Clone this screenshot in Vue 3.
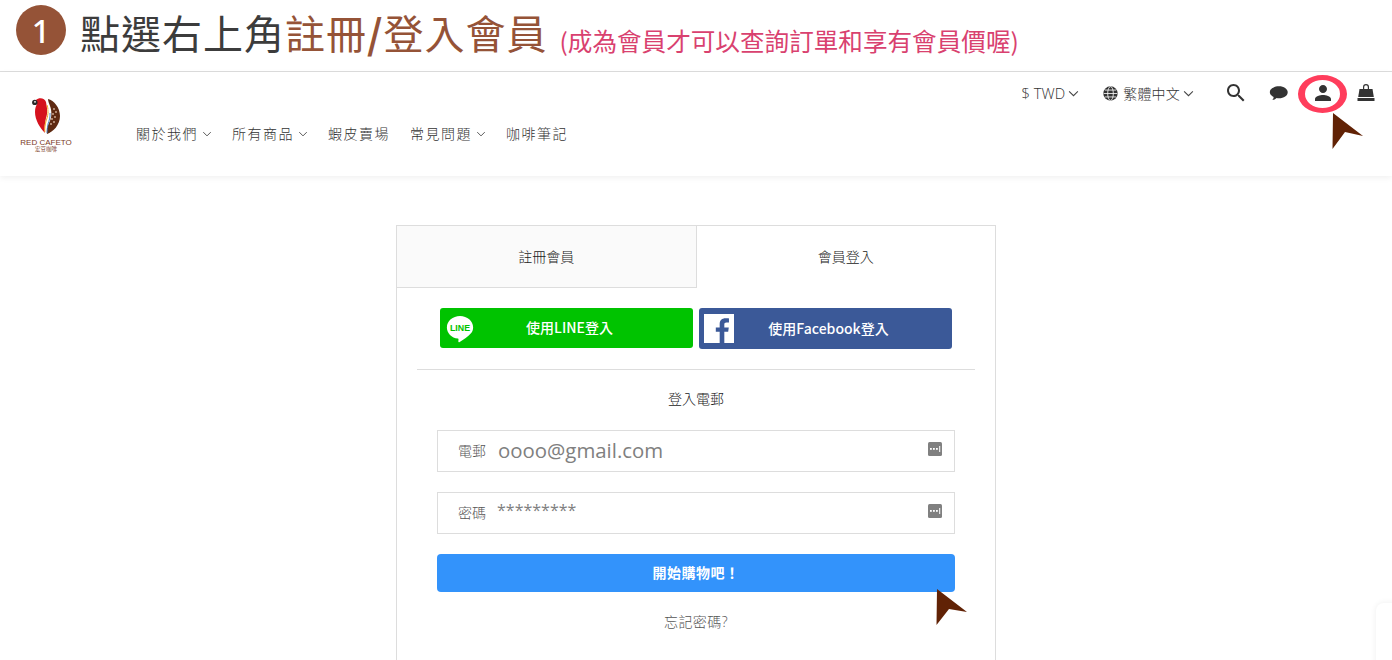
<script setup>
const navItems = [
  { label: '關於我們', caret: true },
  { label: '所有商品', caret: true },
  { label: '蝦皮賣場', caret: false },
  { label: '常見問題', caret: true },
  { label: '咖啡筆記', caret: false },
]
const fields = [
  { label: '電郵', value: 'oooo@gmail.com', cls: 'val-mail' },
  { label: '密碼', value: '*********', cls: 'val-pass' },
]
</script>

<template>
  <div class="page">
    <div class="banner">
      <span class="step">1</span>
      <h1 class="title">點選右上角<em>註冊<b>/</b>登入會員</em></h1>
      <span class="sub">(成為會員才可以查詢訂單和享有會員價喔)</span>
    </div>

    <header class="header">
      <div class="logo">
        <svg class="logo-mark" viewBox="0 0 28 36" width="28" height="36">
          <path d="M16 1C22 2 28 10 28 18C28 27 21 34 15 36C14 33 15 29 17 25C20 20 20 13 18 8C17 5 16 3 16 1Z" fill="#5f2a12" />
          <path d="M4 2C7-1 13 0 14 4C15 10 16 14 14 20C13 25 12 30 13 35C8 30 3 22 3 14C3 10 4 8 5 6Z" fill="#d5121e" />
          <path d="M15 7C17 13 16 18 14 23C13 27 12.500 30 13 34" fill="none" stroke="#f2a81d" stroke-width="1" />
          <path d="M17 11C18 16 17 20 15.500 24C14.500 27 14 31 14.200 35" fill="none" stroke="#fff" stroke-width="1" />
          <path d="M18 15C18.500 19 17 23 16 26C15.500 29 15 32 15 35" fill="none" stroke="#3e7cc0" stroke-width=".9" />
          <circle cx="2.800" cy="4.400" r="2.700" fill="#2a2a2a" />
          <circle cx="3" cy="3.800" r=".9" fill="#fff" />
          <g fill="#d9b7a0">
            <circle cx="22" cy="11" r=".9" /><circle cx="24" cy="14" r=".9" /><circle cx="21" cy="16" r=".9" />
            <circle cx="23" cy="19" r=".9" /><circle cx="20" cy="21" r=".9" /><circle cx="22" cy="24" r=".9" /><circle cx="19" cy="26" r=".9" />
          </g>
        </svg>
        <span class="logo-en">RED CAFETO</span>
        <span class="logo-zh">宏豆咖啡</span>
      </div>

      <div class="header-main">
        <div class="utility">
          <span class="util-item currency">$ TWD
            <svg viewBox="0 0 12 8" width="11" height="7"><path d="M1 1.500l5 5 5-5" fill="none" stroke="#444" stroke-width="1.200" /></svg>
          </span>
          <span class="util-item lang">
            <svg viewBox="0 0 24 24" width="15" height="15" fill="none">
              <circle cx="12" cy="12" r="11.500" fill="#333" />
              <g stroke="#fff" stroke-width="1.300" fill="none">
                <ellipse cx="12" cy="12" rx="4.500" ry="11" />
                <path d="M1 12h22M3 6.500h18M3 17.500h18" />
              </g>
            </svg>
            <span class="lang-text">繁體中文</span>
            <svg class="lang-caret" viewBox="0 0 12 8" width="11" height="7"><path d="M1 1.500l5 5 5-5" fill="none" stroke="#444" stroke-width="1.200" /></svg>
          </span>
          <div class="tools">
            <svg class="ico-search" viewBox="0 0 24 24" width="24" height="24" fill="#333"><path d="M15.500 14h-.79l-.28-.27C15.410 12.590 16 11.110 16 9.500 16 5.910 13.090 3 9.500 3S3 5.910 3 9.500 5.910 16 9.500 16c1.610 0 3.090-.59 4.230-1.570l.27.28v.79l5 4.990L20.490 19l-4.990-5zm-6 0C7.010 14 5 11.990 5 9.500S7.010 5 9.500 5 14 7.010 14 9.500 11.990 14 9.500 14z" /></svg>
            <svg viewBox="0 0 24 24" width="22" height="22" fill="#333"><path d="M12 4.500c5.300 0 9.500 2.900 9.500 6.600s-4.200 6.600-9.500 6.600c-.9 0-1.800-.1-2.600-.3-1.300 1.300-3 2-4.700 2.200.8-.9 1.400-2 1.500-3.300-2.600-1.200-4.200-3-4.200-5.200 0-3.700 4.700-6.600 10-6.600z" /></svg>
            <svg viewBox="0 0 24 24" width="24" height="24" fill="#333"><path d="M12 12c2.210 0 4-1.790 4-4s-1.790-4-4-4-4 1.790-4 4 1.790 4 4 4zm0 2c-2.670 0-8 1.340-8 4v2h16v-2c0-2.660-5.330-4-8-4z" /></svg>
            <svg viewBox="0 0 20 20" width="20" height="20" fill="#333"><path d="M7 7V4a3 3 0 0 1 6 0v3h-1.200V4a1.800 1.800 0 0 0-3.600 0v3z" /><path d="M3.500 6h13l1.300 8H2.200z" /><rect x="1.500" y="15" width="17" height="3" /></svg>
          </div>
        </div>
        <nav class="nav">
          <span v-for="item in navItems" :key="item.label" class="nav-item">
            {{ item.label }}
            <svg v-if="item.caret" viewBox="0 0 12 8" width="10" height="6"><path d="M1 1.500l5 5 5-5" fill="none" stroke="#555" stroke-width="1.300" /></svg>
          </span>
        </nav>
      </div>
    </header>

    <main class="main">
      <section class="card">
        <div class="tabs">
          <div class="tab tab-off">註冊會員</div>
          <div class="tab tab-on">會員登入</div>
        </div>
        <div class="body">
          <div class="socials">
            <a class="social line">
              <svg class="line-ico" viewBox="0 0 32 34" width="28" height="30">
                <path d="M16 1C7.700 1 1 6.700 1 14c0 6.500 5.400 11.800 12.600 12.800 1 .2.700 1.300.5 3-.1.900.4 1.500 1.500.9 3.800-2 9.500-6 12.400-9.300C30 19.200 31 16.800 31 14 31 6.700 24.300 1 16 1z" fill="#fff" />
                <text x="16" y="18.500" text-anchor="middle" textLength="23" lengthAdjust="spacingAndGlyphs" class="line-word">LINE</text>
              </svg>
              <span>使用LINE登入</span>
            </a>
            <a class="social fb">
              <svg class="fb-ico" viewBox="0 0 31 31" width="30" height="29" preserveAspectRatio="none">
                <rect width="31" height="31" fill="#fff" />
                <path d="M21 31V19h4l.6-4.700H21v-3c0-1.400.4-2.300 2.300-2.300h2.500V4.800c-.4-.1-1.900-.2-3.600-.2-3.600 0-6 2.200-6 6.200v3.500h-4V19h4v12z" fill="#3b5998" />
              </svg>
              <span>使用Facebook登入</span>
            </a>
          </div>
          <p class="form-title">登入電郵</p>
          <div v-for="f in fields" :key="f.label" class="field">
            <span class="field-label">{{ f.label }}</span>
            <span class="field-value" :class="f.cls">{{ f.value }}</span>
            <svg class="key" viewBox="0 0 14 14" width="14" height="14">
              <rect width="14" height="14" rx="1.500" fill="#808080" />
              <g fill="#fff"><rect x="2" y="6" width="1.800" height="1.800" /><rect x="5" y="6" width="1.800" height="1.800" /><rect x="8" y="6" width="1.800" height="1.800" /><rect x="11.200" y="4" width="1" height="6" /></g>
            </svg>
          </div>
          <button class="submit" type="button">開始購物吧！</button>
          <p class="forgot">忘記密碼?</p>
        </div>
      </section>
    </main>

    <div class="ring"></div>
    <svg class="pointer pointer-top" viewBox="0 0 34 40" width="34" height="40"><path d="M2 2L32 25 14 21 1.500 38z" fill="#612205" /></svg>
    <svg class="pointer pointer-btn" viewBox="0 0 34 40" width="34" height="40"><path d="M2 2L32 25 14 22 1.500 38z" fill="#612205" /></svg>
    <div class="widget"></div>
  </div>
</template>

<style>
html, body { margin: 0; background: #fff; }
</style>

<style scoped>
.page {
  position: relative;
  height: 660px;
  overflow: hidden;
  background: #fff;
  color: #333;
  font-family: "Open Sans", "Noto Sans CJK TC", sans-serif;
}
.banner {
  display: flex;
  align-items: center;
  height: 72px;
  padding: 0 0 11px 16px;
  box-sizing: border-box;
  border-bottom: 1px solid #ddd;
}
.step {
  width: 50px;
  height: 50px;
  border-radius: 50%;
  background: #955337;
  color: #fff;
  font-size: 32px;
  font-weight: 500;
  line-height: 52px;
  text-align: center;
  font-family: "Noto Sans", sans-serif;
}
.title {
  margin: 0 0 0 14px;
  padding-top: 3px;
  font-size: 40px;
  line-height: 50px;
  font-weight: 400;
  letter-spacing: 1px;
  color: #3c3c3c;
  font-family: "Noto Sans CJK TC", sans-serif;
}
.title em {
  font-style: normal;
  color: #955337;
}
.title b { font-weight: 700; }
.sub {
  margin: 0 0 0 12px;
  padding-top: 20px;
  font-size: 24.600px;
  line-height: 36px;
  font-weight: 400;
  color: #d9416f;
  font-family: "Noto Sans CJK TC", sans-serif;
}
.header {
  display: flex;
  height: 104px;
  box-sizing: border-box;
  padding: 26px 16px 0 20px;
  box-shadow: 0 2px 6px rgba(0, 0, 0, .06);
}
.logo {
  width: 52px;
  display: flex;
  flex-direction: column;
  align-items: center;
  color: #7a3a1e;
  line-height: 1;
}
.logo-mark { display: block; margin: 0 0 5px; flex: none; }
.logo-en {
  font-size: 8px;
  white-space: nowrap;
  font-family: "Liberation Sans", sans-serif;
}
.logo-zh { font-size: 5.500px; margin-top: 0; white-space: nowrap; }
.header-main {
  flex: 1;
  min-width: 0;
  display: flex;
  flex-direction: column;
}
.utility {
  display: flex;
  justify-content: flex-end;
  align-items: center;
  height: 22px;
  margin-top: -16px;
  font-size: 14px;
  color: #333;
}
.util-item {
  display: inline-flex;
  align-items: center;
  gap: 3px;
  white-space: nowrap;
}
.currency { font-size: 14.800px; font-weight: 300; }
.lang { margin-left: 24px; gap: 5px; }
.lang-text { font-size: 14px; letter-spacing: .2px; font-weight: 300; }
.lang-caret { margin-left: -2px; }
.tools {
  display: flex;
  align-items: center;
  gap: 21px;
  margin-left: 30px;
}
.ico-search { margin-right: -1px; }
.nav {
  display: flex;
  gap: 20px;
  margin: 19px 0 0 64px;
  font-size: 14px;
  font-weight: 300;
  letter-spacing: 1.500px;
  color: #333;
}
.nav-item {
  display: inline-flex;
  align-items: center;
  gap: 4px;
  white-space: nowrap;
  line-height: 22px;
}
.main {
  display: flex;
  justify-content: center;
  padding-top: 49px;
}
.card {
  width: 600px;
  min-height: 600px;
  box-sizing: border-box;
  border: 1px solid #ddd;
}
.tabs {
  display: flex;
  height: 62px;
  font-size: 14px;
  font-weight: 300;
  color: #222;
}
.tab {
  flex: 1 1 0;
  box-sizing: border-box;
  display: flex;
  align-items: center;
  justify-content: center;
  padding-bottom: 2px;
}
.tab-off {
  background: #fafafa;
  border-right: 1px solid #ddd;
  border-bottom: 1px solid #ddd;
}
.body {
  padding: 20px 20px 0;
}
.socials {
  display: flex;
  justify-content: center;
  gap: 6px;
  padding-bottom: 20px;
  border-bottom: 1px solid #ddd;
}
.social {
  position: relative;
  width: 253px;
  height: 40px;
  padding: 0 0 2px 6px;
  box-sizing: border-box;
  border-radius: 3px;
  display: flex;
  align-items: center;
  justify-content: center;
  color: #fff;
  font-size: 14px;
  font-weight: 500;
  font-family: "Noto Sans CJK TC", sans-serif;
}
.social.line { background: #00c300; }
.social.fb { background: #3b5998; height: 41px; }
.line-ico { position: absolute; top: 7px; left: 6px; }
.fb-ico { position: absolute; left: 5px; top: 6px; }
.line-word {
  font-size: 10.500px;
  font-weight: 700;
  fill: #00c300;
  font-family: "Liberation Sans", sans-serif;
}
.form-title {
  margin: 19px 0 21px;
  text-align: center;
  font-size: 14px;
  font-weight: 300;
  line-height: 20px;
  color: #222;
}
.field {
  display: flex;
  align-items: center;
  height: 42px;
  box-sizing: border-box;
  margin: 0 20px 20px;
  border: 1px solid #ddd;
  padding: 0 12px 0 20px;
  color: #808080;
}
.field-label {
  width: 40px;
  padding-bottom: 2px;
  font-size: 14px;
  font-weight: 300;
  color: #555;
}
.field-value { flex: 1; }
.val-mail { font-size: 20.400px; margin-top: -2px; }
.val-pass { font-size: 16px; line-height: 20px; margin: -7px 0 0 -1px; }
.key { margin-top: -4px; }
.submit {
  display: block;
  width: 518px;
  height: 38px;
  margin: 0 20px;
  padding: 0 0 2px;
  border: 0;
  border-radius: 4px;
  background: #3393fb;
  color: #fff;
  font-size: 14px;
  font-weight: 700;
  letter-spacing: .5px;
  font-family: inherit;
}
.forgot {
  margin: 20px 0 0;
  text-align: center;
  font-size: 14px;
  font-weight: 300;
  line-height: 20px;
  color: #555;
  letter-spacing: .4px;
}
.ring {
  position: absolute;
  left: 1298px;
  top: 75px;
  width: 49px;
  height: 38px;
  box-sizing: border-box;
  border-style: solid;
  border-width: 5px 7px;
  border-color: #ff3d5c;
  border-radius: 50%;
}
.pointer { position: absolute; }
.pointer-top { left: 1331px; top: 111px; }
.pointer-btn { left: 935px; top: 587px; }
.widget {
  position: absolute;
  left: 1376px;
  top: 603px;
  width: 40px;
  height: 80px;
  border-radius: 8px;
  box-shadow: 0 0 6px rgba(0, 0, 0, .07);
}
</style>
